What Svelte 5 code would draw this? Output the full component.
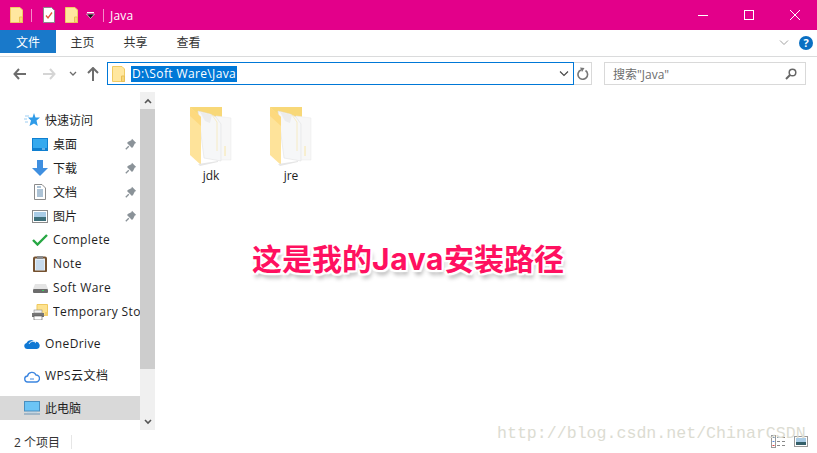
<script>
	let nav_items = [
		{ name: '桌面', icon: 'desktop', pin: true },
		{ name: '下载', icon: 'download', pin: true },
		{ name: '文档', icon: 'docs', pin: true },
		{ name: '图片', icon: 'pics', pin: true },
		{ name: 'Complete', icon: 'check', latin: true },
		{ name: 'Note', icon: 'note', latin: true },
		{ name: 'Soft Ware', icon: 'drive', latin: true },
		{ name: 'Temporary Storage', icon: 'temp', latin: true }
	]
	let files = ['jdk', 'jre']
</script>

{#snippet folder_small()}
	<svg width="13" height="16" viewBox="0 0 13 16">
		<path d="M.5.5h9.500l2.500 2.500v12.500H.5z" fill="#ffe79f" stroke="#f0cb63"/>
		<path d="M9.500 10h3v5.500h-3z" fill="#f6d677" stroke="#e9bf55"/>
	</svg>
{/snippet}

{#snippet pin()}
	<svg class="pin" width="12" height="12" viewBox="0 0 12 12">
		<path d="M7 .8 11.200 5 9.800 5.600 8.200 8.800 7 10 2 5l1.200-1.200L6.400 2.200z" fill="#8a9298"/>
		<path d="M3.800 8.200.8 11.200" stroke="#8a9298" stroke-width="1.300"/>
	</svg>
{/snippet}

{#snippet big_folder()}
	<svg width="46" height="60" viewBox="0 0 46 60">
		<path d="M2 1h32v14H2z" fill="#f8d878"/>
		<path d="M28 10 43 12V54H28z" fill="#f7f7f7" stroke="#ececec" stroke-width=".6"/>
		<path d="M10 5 22 8 28 11 33 18V55L16 52z" fill="#f6f7f8" stroke="#e2e2e2" stroke-width=".6"/>
		<path d="M12 6 24 9 22 17 17 15z" fill="#ececec"/>
		<path d="M37 40v10" stroke="#f8e6a8" stroke-width="1"/>
		<path d="M24 9 29 16V45" fill="none" stroke="#f8e9b8" stroke-width=".8"/>
		<path d="M2 1 13 11V59L2 49z" fill="#fee39a"/>
		<path d="M2 1 13 11V20L2 10z" fill="#fdd97e"/>
		<path d="M10 58 30 55V56L12 60z" fill="#e6e6e6"/>
	</svg>
{/snippet}

{#snippet nav_icon(kind)}
	{#if kind === 'desktop'}
		<svg width="16" height="13" viewBox="0 0 16 13"><rect x=".5" y=".5" width="15" height="12" fill="#35a9ee" stroke="#0f7fd0"/><path d="M1 10h14v2H1z" fill="#0f7fd0"/><path d="M10 10.500h3v1h-3z" fill="#bfe4fb"/></svg>
	{:else if kind === 'download'}
		<svg width="16" height="16" viewBox="0 0 16 16"><path d="M5 0h6v8h5l-8 8-8-8h5z" fill="#3f8fe0"/></svg>
	{:else if kind === 'docs'}
		<svg width="12" height="16" viewBox="0 0 12 16"><path d="M.5.500h7.500l3.500 3.500v11.500H.5z" fill="#fff" stroke="#8b8b8b"/><path d="M3 3h4M3 6h6M3 8h6M3 10h6M3 12h6" stroke="#5b87ad"/></svg>
	{:else if kind === 'pics'}
		<svg width="16" height="13" viewBox="0 0 16 13"><rect x=".5" y=".5" width="15" height="12" fill="#fff" stroke="#8b8b8b"/><rect x="2" y="2" width="12" height="5" fill="#a9cce6"/><rect x="2" y="7" width="12" height="4" fill="#3d6f7a"/></svg>
	{:else if kind === 'check'}
		<svg width="16" height="12" viewBox="0 0 16 12"><path d="M1 6l4.500 4.500L15 1" fill="none" stroke="#27a743" stroke-width="2.400"/></svg>
	{:else if kind === 'note'}
		<svg width="14" height="16" viewBox="0 0 14 16"><rect x="1" y="1.500" width="12" height="14" rx="1" fill="#e4eef7" stroke="#75512f" stroke-width="2"/><rect x="4" y="0" width="6" height="3" fill="#8a8a8a"/><path d="M3 5h8M3 7h8M3 9h8M3 11h8M3 13h8" stroke="#a9c6e2"/></svg>
	{:else if kind === 'drive'}
		<svg width="15" height="9" viewBox="0 0 15 9"><path d="M2 0h11l2 5H0z" fill="#e4e4e4"/><rect y="5" width="15" height="4" rx="1" fill="#6c6c6c"/><rect x="9" y="6" width="2" height="1" fill="#38d05c"/></svg>
	{:else if kind === 'temp'}
		<svg width="16" height="16" viewBox="0 0 16 16"><path d="M5 .5h10.500v11H5z" fill="#fde28f" stroke="#efc95f"/><path d="M13 8h2.500v4H13z" fill="#f4cf6b"/><rect y="9" width="12" height="4" fill="#757575"/><rect x="2" y="6" width="8" height="3" fill="#f2f2f2" stroke="#777" stroke-width=".5"/><rect x="2" y="12" width="8" height="4" fill="#fff" stroke="#555" stroke-width=".6"/></svg>
	{/if}
{/snippet}

<div class="window">
	<header class="titlebar">
		<span class="qa first">{@render folder_small()}</span>
		<i class="sep"></i>
		<span class="qa doc">
			<svg width="12" height="16" viewBox="0 0 12 16"><path d="M.5.500h8l3 3v12H.5z" fill="#fff" stroke="#8b8b8b"/><path d="M3 8.500l2 2.500L9 5.500" fill="none" stroke="#e2543a" stroke-width="1.300"/></svg>
		</span>
		<span class="qa">{@render folder_small()}</span>
		<span class="qa drop">
			<svg width="9" height="9" viewBox="0 0 9 9"><path d="M1 1.500h7" stroke="#fff"/><path d="M.5 3h8L4.500 7.500z" fill="#111" stroke="#fff" stroke-width=".6"/></svg>
		</span>
		<i class="sep"></i>
		<span class="title">Java</span>
		<div class="controls">
			<svg width="12" height="12" viewBox="0 0 12 12"><path d="M1 6.500h10" stroke="#fff"/></svg>
			<svg width="12" height="12" viewBox="0 0 12 12"><rect x="1.500" y="1.500" width="9" height="9" fill="none" stroke="#fff"/></svg>
			<svg width="12" height="12" viewBox="0 0 12 12"><path d="M1 1l10 10M11 1 1 11" stroke="#fff"/></svg>
		</div>
	</header>

	<div class="ribbon">
		<span class="tab file">文件</span>
		<span class="tab">主页</span>
		<span class="tab">共享</span>
		<span class="tab">查看</span>
		<div class="ribbon-right">
			<svg width="10" height="6" viewBox="0 0 10 6"><path d="M1 .5l4 4 4-4" fill="none" stroke="#a0a0a0"/></svg>
			<span class="help">?</span>
		</div>
	</div>

	<div class="addressrow">
		<div class="arrows">
			<svg class="back" width="13" height="12" viewBox="0 0 13 12"><path d="M6 1 1.500 6 6 11M2 6h11" fill="none" stroke="#6d6d6d" stroke-width="2"/></svg>
			<svg class="fwd" width="13" height="12" viewBox="0 0 13 12"><path d="M7 1l4.500 5L7 11M11 6H0" fill="none" stroke="#d5d5d5" stroke-width="2"/></svg>
			<svg class="mini" width="8" height="6" viewBox="0 0 8 6"><path d="M1 1l3 3 3-3" fill="none" stroke="#6d6d6d" stroke-width="1.300"/></svg>
			<svg class="up" width="12" height="14" viewBox="0 0 12 14"><path d="M1 6l5-5 5 5M6 1.500V14" fill="none" stroke="#6d6d6d" stroke-width="2"/></svg>
		</div>
		<div class="address">
			{@render folder_small()}
			<span class="path">D:\Soft Ware\Java</span>
			<svg class="addr-chev" width="10" height="6" viewBox="0 0 10 6"><path d="M1 .5l4 4 4-4" fill="none" stroke="#444" stroke-width="1.100"/></svg>
		</div>
		<div class="refresh">
			<svg width="12" height="13" viewBox="0 0 12 13"><path d="M8.500 3.500A4.800 4.800 0 1 1 4 3" fill="none" stroke="#777" stroke-width="1.600"/><path d="M3 .5 7.500 1 5 5z" fill="#777"/></svg>
		</div>
		<div class="search">
			<span>搜索"Java"</span>
			<svg width="12" height="12" viewBox="0 0 12 12"><circle cx="7.500" cy="4.500" r="3.300" fill="none" stroke="#666" stroke-width="1.500"/><path d="M5 7 1 11" stroke="#666" stroke-width="2"/></svg>
		</div>
	</div>

	<div class="main">
		<nav class="sidebar">
			<div class="navlist">
				<div class="row top">
					<svg width="16" height="14" viewBox="0 0 16 14"><path d="M10 0l1.500 4.500H16l-3.500 3 1.300 5.500L10 10.500 5.500 13l1.500-5.500-3-3h4.500z" fill="#2f9be8"/><path d="M1 3h4M0 6h3M1 9h3" stroke="#9ccdf2"/></svg>
					<span>快速访问</span>
				</div>
				{#each nav_items as item}
					<div class="row sub">
						<span class="iconbox">{@render nav_icon(item.icon)}</span>
						<span class="label" class:latin={item.latin}>{item.name}</span>
						{#if item.pin}{@render pin()}{/if}
					</div>
				{/each}
				<div class="row top group">
					<svg width="16" height="10" viewBox="0 0 16 10"><path d="M3 10a3 3 0 0 1-.500-5.900A5 5 0 0 1 11 3a3.500 3.500 0 0 1 2 7z" fill="#0f78d4"/><path d="M5 5a4 4 0 0 1 7-1" fill="none" stroke="#fff" stroke-width=".8"/></svg>
					<span class="latin">OneDrive</span>
				</div>
				<div class="row top group">
					<svg width="16" height="13" viewBox="0 0 16 13"><path d="M4 12a3 3 0 0 1-.500-6A4.500 4.500 0 0 1 12 5a3.500 3.500 0 0 1 0 7z" fill="none" stroke="#3d86e0" stroke-width="1.400"/><path d="M6 9h4" stroke="#3d86e0"/></svg>
					<span class="latin">WPS云文档</span>
				</div>
				<div class="row top group current">
					<svg width="16" height="14" viewBox="0 0 16 14"><rect x=".5" y=".5" width="15" height="9.500" fill="#6cc4f5" stroke="#4a8fbf"/><path d="M0 13h16" stroke="#8aa6bd" stroke-width="1.400"/><path d="M3 11.500h10" stroke="#c3d5e2"/></svg>
					<span>此电脑</span>
				</div>
			</div>
			<div class="scrollbar">
				<button class="sb-btn" aria-label="up"><svg width="8" height="6" viewBox="0 0 8 6"><path d="M1 5l3-3 3 3" fill="none" stroke="#555" stroke-width="1.600"/></svg></button>
				<div class="thumb"></div>
				<div class="track"></div>
				<button class="sb-btn" aria-label="down"><svg width="8" height="6" viewBox="0 0 8 6"><path d="M1 1l3 3 3-3" fill="none" stroke="#555" stroke-width="1.600"/></svg></button>
			</div>
		</nav>
		<section class="files">
			{#each files as f}
				<div class="file-item">
					{@render big_folder()}
					<span>{f}</span>
				</div>
			{/each}
		</section>
	</div>

	<footer class="status">
		<span class="count">2 个项目</span>
		<i class="status-sep"></i>
		<div class="views">
			<svg width="17" height="13" viewBox="0 0 17 13"><rect x=".5" y=".5" width="4" height="12" fill="#fff" stroke="#999"/><path d="M1.500 2.500h2" stroke="#58a"/><path d="M1.500 6.500h2" stroke="#58d"/><path d="M1.500 10.500h2" stroke="#d44"/><path d="M6 2.500h3M11 2.500h3M6 6.500h3M11 6.500h3M6 10.500h3M11 10.500h3" stroke="#888"/></svg>
			<svg width="14" height="11" viewBox="0 0 14 11"><rect x=".5" y=".5" width="13" height="10" fill="#fff" stroke="#999"/><rect x="2" y="2" width="10" height="4" fill="#a9cce6"/><rect x="2" y="6" width="10" height="3" fill="#35606a"/></svg>
		</div>
	</footer>

	<div class="annotation">这是我的<span class="ann-latin">Java</span>安装路径</div>
	<div class="watermark">http://blog.csdn.net/ChinarCSDN</div>
</div>

<style>
	:global(body) {
		margin: 0;
		background: #fff;
	}
	.window {
		position: relative;
		width: 817px;
		height: 453px;
		overflow: hidden;
		display: flex;
		flex-direction: column;
		font-family: "Open Sans", "Noto Sans CJK SC", sans-serif;
		font-size: 12px;
		color: #1e1e1e;
	}
	svg {
		display: block;
		flex: none;
	}
	.titlebar {
		height: 30px;
		flex: none;
		background: #e3008a;
		display: flex;
		align-items: center;
		color: #fff;
	}
	.qa.first {
		margin-left: 10px;
	}
	.qa.doc {
		margin-left: 11px;
	}
	.qa {
		margin-left: 10px;
	}
	.qa.drop {
		margin-left: 8px;
	}
	.sep {
		width: 1px;
		height: 13px;
		margin-left: 8px;
		background: #f58cc8;
	}
	.title {
		margin-left: 6px;
		letter-spacing: 0.2px;
	}
	.controls {
		margin-left: auto;
		display: flex;
		gap: 34px;
		margin-right: 16px;
	}
	.ribbon {
		height: 26px;
		flex: none;
		box-sizing: content-box;
		border-bottom: 1px solid #dadbdc;
		display: flex;
		align-items: flex-start;
	}
	.tab {
		width: 53px;
		height: 23px;
		line-height: 26px;
		text-align: center;
		color: #333;
	}
	.tab.file {
		width: 56px;
		background: #1979ca;
		color: #fff;
	}
	.ribbon-right {
		margin-left: auto;
		margin-right: 4px;
		display: flex;
		align-items: center;
		gap: 10px;
		height: 26px;
	}
	.help {
		width: 14px;
		height: 14px;
		border-radius: 50%;
		background: #0a6fc2;
		color: #fff;
		font-weight: 700;
		font-size: 11px;
		line-height: 14px;
		text-align: center;
	}
	.addressrow {
		height: 35px;
		flex: none;
		display: flex;
		align-items: flex-start;
		padding-top: 5px;
		box-sizing: border-box;
	}
	.arrows {
		width: 107px;
		height: 23px;
		display: flex;
		align-items: center;
		padding-left: 13px;
		box-sizing: border-box;
	}
	.arrows .fwd {
		margin-left: 17px;
	}
	.arrows .mini {
		margin-left: 13px;
	}
	.arrows .up {
		margin-left: 10px;
	}
	.address {
		width: 467px;
		height: 23px;
		box-sizing: border-box;
		border: 1px solid #0078d7;
		display: flex;
		align-items: center;
		padding-left: 4px;
	}
	.path {
		margin-left: 6px;
		background: #0078d7;
		color: #fff;
		line-height: 16px;
		height: 16px;
		padding: 0 1px;
		letter-spacing: 0.37px;
	}
	.addr-chev {
		margin-left: auto;
		margin-right: 4px;
	}
	.refresh {
		width: 18px;
		height: 23px;
		box-sizing: border-box;
		border: 1px solid #d9d9d9;
		border-left: none;
		display: flex;
		align-items: center;
		justify-content: center;
	}
	.search {
		width: 202px;
		height: 23px;
		margin-left: 12px;
		box-sizing: border-box;
		border: 1px solid #d9d9d9;
		display: flex;
		align-items: center;
		justify-content: space-between;
		padding: 0 8px 0 8px;
		color: #6d6d6d;
	}
	.main {
		flex: 1;
		display: flex;
		min-height: 0;
	}
	.sidebar {
		width: 155px;
		flex: none;
		display: flex;
	}
	.navlist {
		width: 140px;
		padding-top: 16px;
		box-sizing: border-box;
		overflow: hidden;
	}
	.row {
		height: 24px;
		display: flex;
		align-items: center;
		white-space: nowrap;
	}
	.row.top {
		padding-left: 24px;
		gap: 5px;
	}
	.row.sub {
		padding-left: 32px;
	}
	.iconbox {
		width: 16px;
		display: flex;
		justify-content: center;
		margin-right: 5px;
	}
	.label {
		flex: 1;
		overflow: hidden;
		min-width: 0;
	}
	.latin {
		letter-spacing: 0.4px;
		padding-bottom: 2px;
	}
	.pin {
		margin-right: 3px;
		margin-left: 3px;
	}
	.row.group {
		margin-top: 8px;
	}
	.current {
		background: #d9d9d9;
	}
	.scrollbar {
		width: 15px;
		display: flex;
		flex-direction: column;
		background: #f0f0f0;
	}
	.sb-btn {
		width: 15px;
		height: 17px;
		padding: 0;
		border: none;
		background: #f0f0f0;
		display: flex;
		align-items: center;
		justify-content: center;
	}
	.thumb {
		height: 260px;
		background: #cdcdcd;
	}
	.track {
		flex: 1;
	}
	.files {
		flex: 1;
		display: flex;
		align-items: flex-start;
		padding: 14px 0 0 16px;
	}
	.file-item {
		width: 80px;
		display: flex;
		flex-direction: column;
		align-items: center;
		gap: 1px;
		color: #1e1e1e;
	}
	.status {
		height: 23px;
		flex: none;
		display: flex;
		align-items: center;
		color: #333;
	}
	.count {
		margin-left: 14px;
	}
	.status-sep {
		width: 1px;
		height: 14px;
		margin-left: 11px;
		background: #e6e6e6;
	}
	.views {
		margin-left: auto;
		margin-right: 9px;
		display: flex;
		align-items: center;
		gap: 6px;
	}
	.annotation {
		position: absolute;
		left: 252px;
		top: 238px;
		font-size: 30px;
		font-weight: 700;
		line-height: 42px;
		color: #ff1060;
		white-space: nowrap;
		text-shadow:
			2px 0 1px #fff, -2px 0 1px #fff, 0 2px 1px #fff, 0 -2px 1px #fff,
			2px 2px 1px #fff, -2px 2px 1px #fff, 2px -2px 1px #fff, -2px -2px 1px #fff,
			2px 5px 4px rgba(0, 0, 0, 0.3);
	}
	.ann-latin {
		font-family: "Inter", sans-serif;
		letter-spacing: 0.6px;
	}
	.watermark {
		position: absolute;
		left: 497px;
		top: 424px;
		font-family: "Liberation Mono", monospace;
		font-size: 16.6px;
		line-height: 20px;
		color: #dcdcd2;
		white-space: nowrap;
		pointer-events: none;
	}
</style>
